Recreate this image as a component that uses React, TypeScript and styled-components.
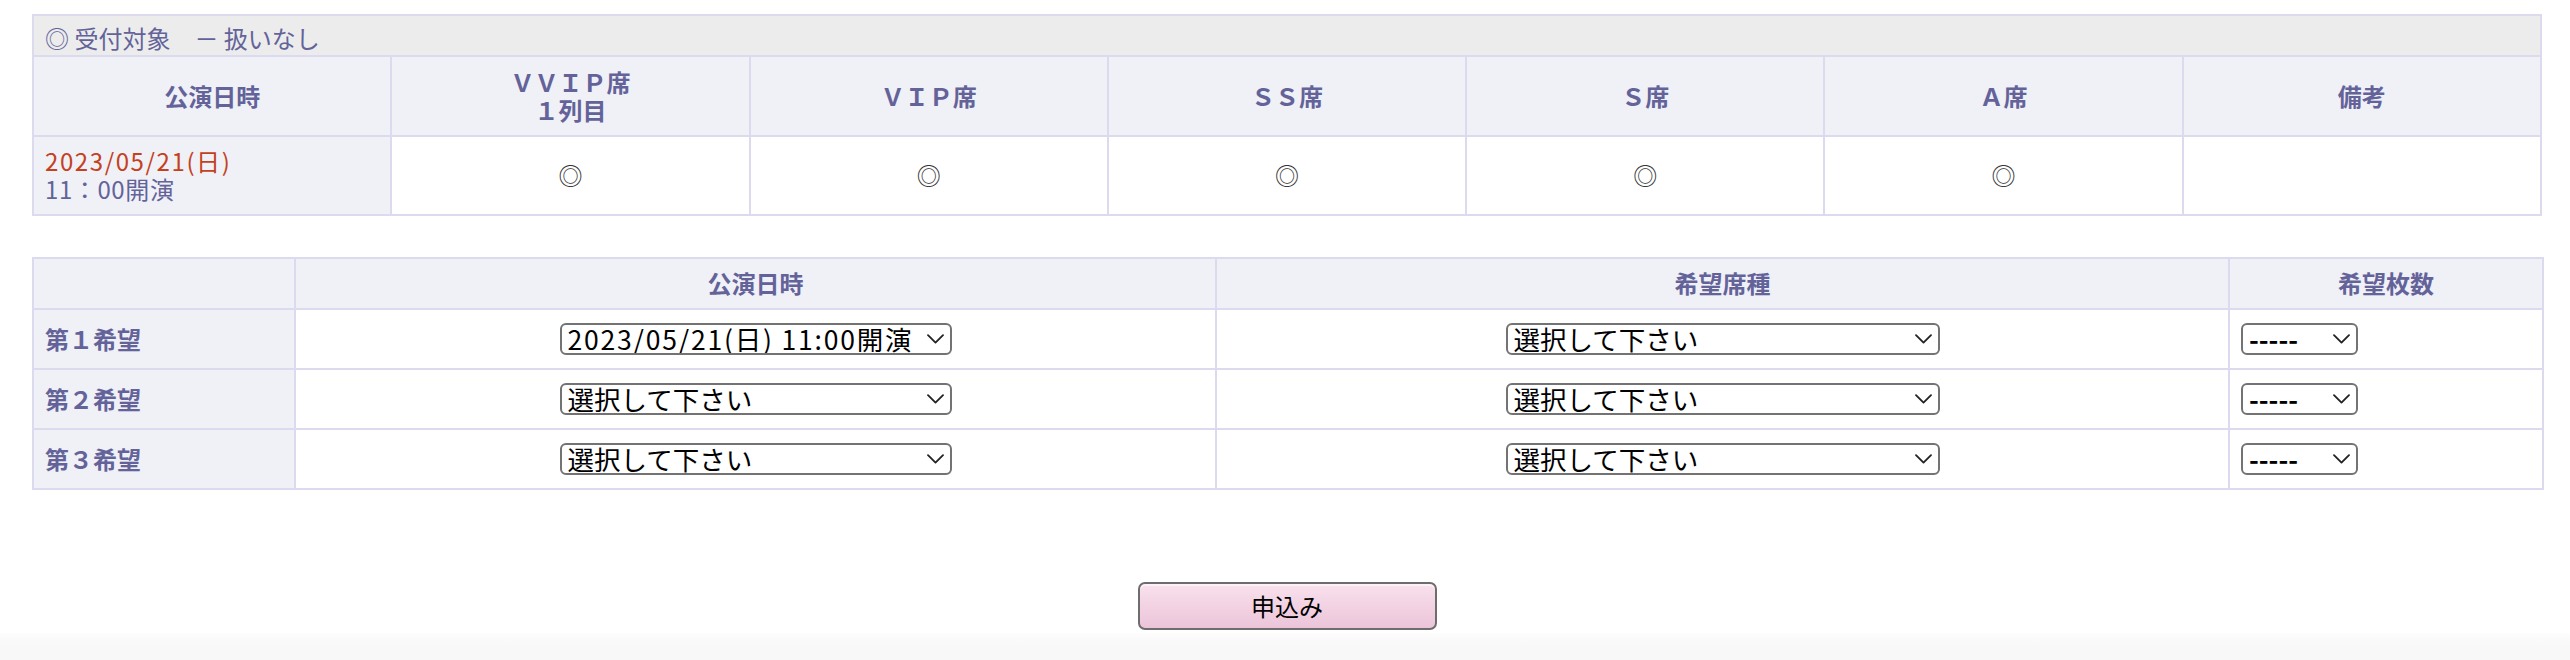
import React from "react";
import styled, { createGlobalStyle } from "styled-components";

const GlobalStyle = createGlobalStyle`
  html, body { margin: 0; padding: 0; background: #ffffff; }
  body { font-family: "Noto Sans CJK JP", "Noto Sans", sans-serif; }
`;

const LINE = "#dcdaee";
const HEAD_BG = "#f0f0f7";
const INK = "#63639a";

const Page = styled.div`
  width: 2570px;
  height: 660px;
  display: flex;
  flex-direction: column;
  overflow: hidden;
`;

const Main = styled.div`
  padding: 14px 28px 0 32px;
  display: flex;
  flex-direction: column;
`;

const Table = styled.table<{ $gap?: number }>`
  width: 100%;
  border-collapse: collapse;
  table-layout: fixed;
  border: 2px solid ${LINE};
  font-family: "Noto Sans CJK JP", sans-serif;
  font-size: 24px;
  line-height: 28px;
  color: ${INK};
  margin-top: ${(p) => p.$gap ?? 0}px;
`;

const Col = styled.col<{ $w: number }>`
  width: ${(p) => p.$w}px;
`;

const LegendCell = styled.td`
  background: #ececec;
  border: 2px solid ${LINE};
  padding: 8px 11px 3px;
  text-align: left;
  font-weight: 400;
  white-space: pre;
`;

const Th = styled.th<{ $align?: string; $pad?: string }>`
  background: ${HEAD_BG};
  border: 2px solid ${LINE};
  padding: ${(p) => p.$pad ?? "11px 11px"};
  text-align: ${(p) => p.$align ?? "center"};
  vertical-align: middle;
  font-weight: 700;
  color: ${INK};
`;

const DateCell = styled.td`
  background: ${HEAD_BG};
  border: 2px solid ${LINE};
  padding: 10px 11px 11px;
  text-align: left;
  vertical-align: middle;
`;

const DateText = styled.span`
  color: #c4411e;
  letter-spacing: 1.6px;
`;

const TimeText = styled.span`
  letter-spacing: 0.6px;
`;

const Td = styled.td<{ $align?: string }>`
  background: #ffffff;
  border: 2px solid ${LINE};
  padding: 10px 11px 11px;
  text-align: ${(p) => p.$align ?? "center"};
  vertical-align: middle;
  color: #333333;
`;

const FieldCell = styled.td<{ $align?: string }>`
  background: #ffffff;
  border: 2px solid ${LINE};
  padding: 13px 11px;
  line-height: 0;
  text-align: ${(p) => p.$align ?? "center"};
  vertical-align: middle;
`;

const SelectWrap = styled.span<{ $w: number }>`
  position: relative;
  display: inline-block;
  vertical-align: top;
  width: ${(p) => p.$w}px;
  height: 32px;
`;

const NativeSelect = styled.select<{ $bold?: boolean; $track?: number }>`
  appearance: none;
  -webkit-appearance: none;
  display: block;
  width: 100%;
  height: 32px;
  box-sizing: border-box;
  margin: 0;
  border: 2px solid #737373;
  border-radius: 6px;
  background: #ffffff;
  font-family: "Noto Sans CJK JP", sans-serif;
  font-size: 26.5px;
  font-weight: ${(p) => (p.$bold ? 700 : 400)};
  letter-spacing: ${(p) => p.$track ?? 0}px;
  color: #000000;
  padding: 0 30px 0 6px;
  line-height: 28px;
`;

const Chevron = styled.svg`
  position: absolute;
  right: 8px;
  top: 50%;
  margin-top: -5px;
  width: 17px;
  height: 10px;
  pointer-events: none;
`;

const ButtonRow = styled.div`
  display: flex;
  justify-content: center;
  margin-top: 92px;
`;

const SubmitButton = styled.button`
  width: 299px;
  height: 48px;
  box-sizing: border-box;
  border: 2px solid #6d6d6d;
  border-radius: 7px;
  background: linear-gradient(#f9e1ed, #ecc4d9);
  box-shadow: inset 0 2px 0 rgba(255, 255, 255, 0.55);
  font-family: "Noto Sans CJK JP", sans-serif;
  font-size: 24px;
  line-height: 28px;
  color: #000000;
  padding: 0;
  cursor: pointer;
`;

const Footer = styled.div`
  flex: 1;
  margin-top: 3px;
  background: linear-gradient(#fdfdfd, #f8f8f8 12px);
`;

type SelectProps = { width: number; value: string; options: string[]; bold?: boolean; track?: number };

function Select({ width, value, options, bold, track }: SelectProps) {
  return (
    <SelectWrap $w={width}>
      <NativeSelect defaultValue={value} $bold={bold} $track={track}>
        {options.map((o) => (
          <option key={o} value={o}>
            {o}
          </option>
        ))}
      </NativeSelect>
      <Chevron viewBox="0 0 17 10" aria-hidden>
        <path d="M1 1.2 L8.5 8.6 L16 1.2" fill="none" stroke="#222" strokeWidth="1.8" strokeLinecap="round" strokeLinejoin="round" />
      </Chevron>
    </SelectWrap>
  );
}

const seatHeaders: React.ReactNode[] = [
  <>
    ＶＶＩＰ席
    <br />
    １列目
  </>,
  "ＶＩＰ席",
  "ＳＳ席",
  "Ｓ席",
  "Ａ席",
];

const dateOptions = ["選択して下さい", "2023/05/21(日) 11:00開演"];
const seatOptions = ["選択して下さい", "ＶＶＩＰ席　１列目", "ＶＩＰ席", "ＳＳ席", "Ｓ席", "Ａ席"];
const qtyOptions = ["-----", "1", "2", "3", "4"];

const wishes = [
  { label: "第１希望", date: "2023/05/21(日) 11:00開演", track: 1.8 },
  { label: "第２希望", date: "選択して下さい", track: 0 },
  { label: "第３希望", date: "選択して下さい", track: 0 },
];

export default function App() {
  return (
    <Page>
      <GlobalStyle />
      <Main>
        <Table>
          <tbody>
            <tr>
              <LegendCell colSpan={7}>{"◎ 受付対象　－ 扱いなし"}</LegendCell>
            </tr>
            <tr>
              <Th>公演日時</Th>
              {seatHeaders.map((h, i) => (
                <Th key={i}>{h}</Th>
              ))}
              <Th>備考</Th>
            </tr>
            <tr>
              <DateCell>
                <DateText>2023/05/21(日)</DateText>
                <br />
                <TimeText>11：00開演</TimeText>
              </DateCell>
              {seatHeaders.map((_, i) => (
                <Td key={i}>◎</Td>
              ))}
              <Td />
            </tr>
          </tbody>
        </Table>

        <Table $gap={41}>
          <colgroup>
            <Col $w={262} />
            <Col $w={921} />
            <Col $w={1013} />
            <Col $w={314} />
          </colgroup>
          <tbody>
            <tr>
              <Th $pad="10px 11px 11px" />
              <Th $pad="10px 11px 11px">公演日時</Th>
              <Th $pad="10px 11px 11px">希望席種</Th>
              <Th $pad="10px 11px 11px">希望枚数</Th>
            </tr>
            {wishes.map((w) => (
              <tr key={w.label}>
                <Th $align="left" $pad="0 11px">
                  {w.label}
                </Th>
                <FieldCell>
                  <Select width={392} value={w.date} options={dateOptions} track={w.track} />
                </FieldCell>
                <FieldCell>
                  <Select width={434} value="選択して下さい" options={seatOptions} />
                </FieldCell>
                <FieldCell $align="left">
                  <Select width={117} value="-----" options={qtyOptions} bold />
                </FieldCell>
              </tr>
            ))}
          </tbody>
        </Table>

        <ButtonRow>
          <SubmitButton type="button">申込み</SubmitButton>
        </ButtonRow>
      </Main>
      <Footer />
    </Page>
  );
}
